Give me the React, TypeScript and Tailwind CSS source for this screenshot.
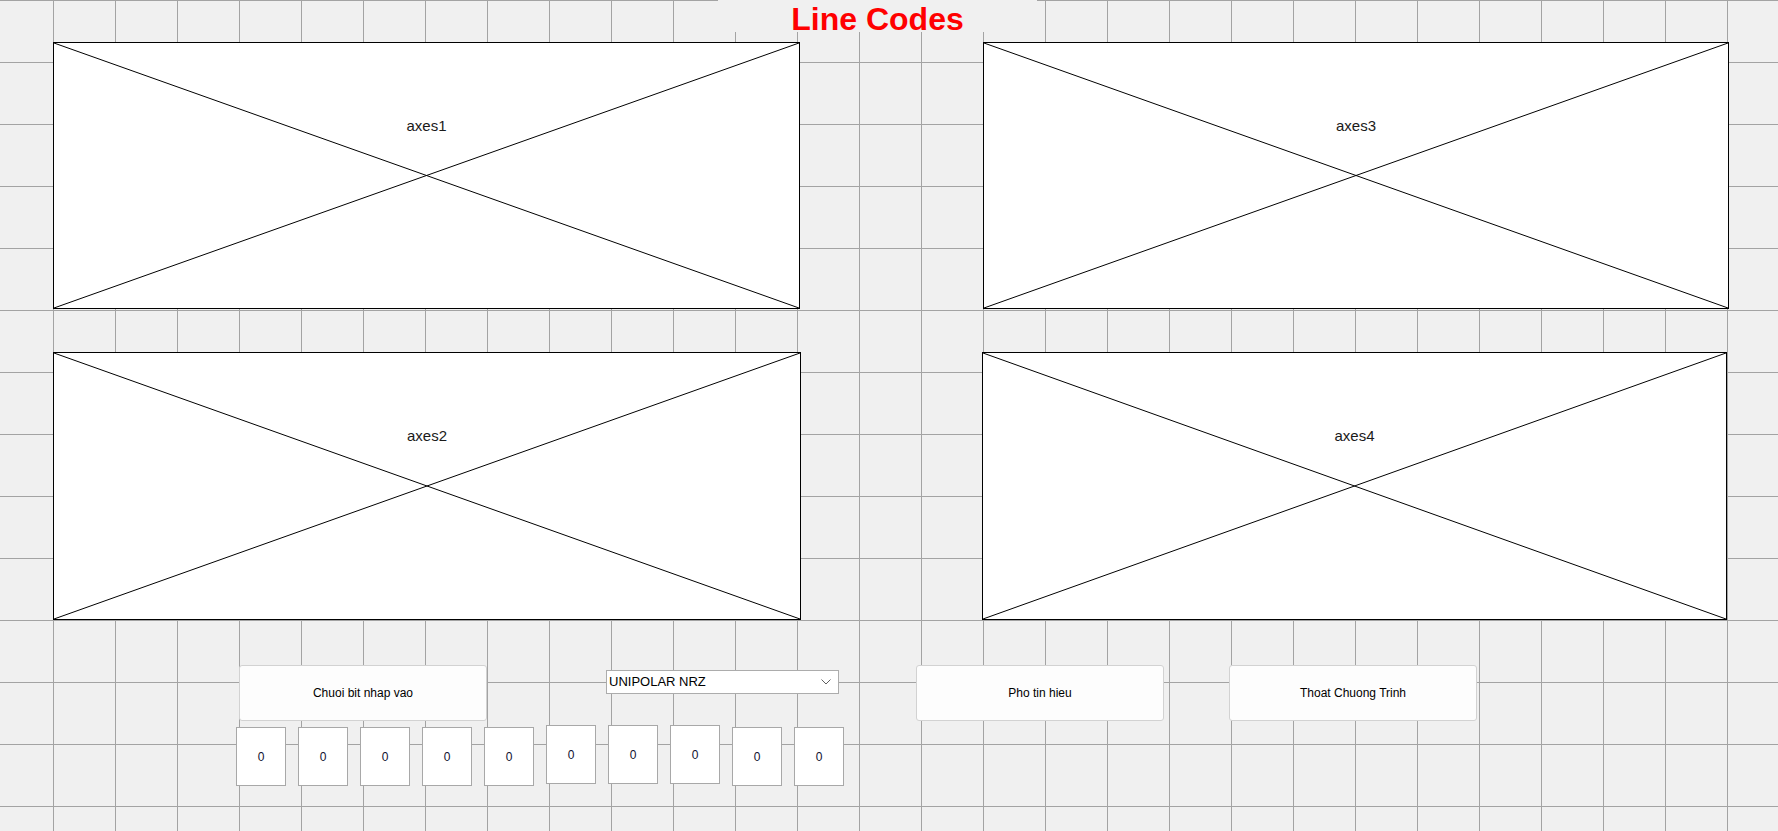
const font = "font-['Liberation_Sans',Arial,sans-serif]"

type AxesProps = {
  label: string
  className: string
}

function Axes({ label, className }: AxesProps) {
  return (
    <div className={`relative shrink-0 border border-black bg-white ${className}`}>
      <svg
        className="absolute inset-0 h-full w-full"
        viewBox="0 0 100 100"
        preserveAspectRatio="none"
      >
        <line x1="0" y1="0" x2="100" y2="100" stroke="#000" strokeWidth="1" vectorEffect="non-scaling-stroke" />
        <line x1="0" y1="100" x2="100" y2="0" stroke="#000" strokeWidth="1" vectorEffect="non-scaling-stroke" />
      </svg>
      <div className="relative pt-[75px] text-center text-[15px] leading-[15px] text-[#1a1a1a]">
        {label}
      </div>
    </div>
  )
}

function PushButton({ label, className }: { label: string; className: string }) {
  return (
    <button
      type="button"
      className={`flex h-[56px] w-[248px] shrink-0 items-center justify-center rounded-[3px] border border-[#d2d2d2] bg-[#fdfdfd] text-[12px] text-black ${className}`}
    >
      {label}
    </button>
  )
}

// bit boxes: some sit 2px lower than others in the layout
const bits = [2, 2, 2, 2, 2, 0, 0, 0, 2, 2]

export default function App() {
  return (
    <div
      className={`${font} h-[831px] w-[1778px] overflow-hidden bg-[#f0f0f0] bg-[linear-gradient(to_right,#a3a3a3_1px,transparent_1px),linear-gradient(to_bottom,#a3a3a3_1px,transparent_1px)] bg-[size:62px_62px] bg-[position:53px_0px] pl-[53px]`}
    >
      {/* title */}
      <div className="ml-[665px] flex h-[32px] w-[319px] items-end justify-center bg-[#f0f0f0] text-[32px] font-bold leading-[30px] text-[#ff0000]">
        <span className="translate-y-[2px]">Line Codes</span>
      </div>

      {/* axes */}
      <div className="mt-[10px] flex">
        <Axes label="axes1" className="h-[267px] w-[747px]" />
        <Axes label="axes3" className="ml-[183px] h-[267px] w-[746px]" />
      </div>
      <div className="mt-[43px] flex">
        <Axes label="axes2" className="h-[268px] w-[748px]" />
        <Axes label="axes4" className="ml-[181px] h-[268px] w-[745px]" />
      </div>

      {/* controls */}
      <div className="mt-[45px] flex items-start">
        <PushButton label="Chuoi bit nhap vao" className="ml-[186px]" />
        <div className="ml-[119px] mt-[5px] flex h-[24px] w-[233px] shrink-0 items-center justify-between border border-[#acacac] bg-white pl-[2px] pr-[7px] text-[13px] text-black">
          <span>UNIPOLAR NRZ</span>
          <svg width="10" height="6" viewBox="0 0 10 6">
            <polyline points="0.5,0.5 5,5 9.5,0.5" fill="none" stroke="#606060" strokeWidth="1" />
          </svg>
        </div>
        <PushButton label="Pho tin hieu" className="ml-[77px]" />
        <PushButton label="Thoat Chuong Trinh" className="ml-[65px]" />
      </div>

      <div className="mt-[4px] ml-[183px] flex items-start gap-[12px]">
        {bits.map((offset, idx) => (
          <div
            key={idx}
            className={`flex h-[59px] w-[50px] shrink-0 items-center justify-center border border-[#a8a8a8] bg-white text-[12px] text-[#101030] ${offset ? 'mt-[2px]' : ''}`}
          >
            0
          </div>
        ))}
      </div>
    </div>
  )
}
